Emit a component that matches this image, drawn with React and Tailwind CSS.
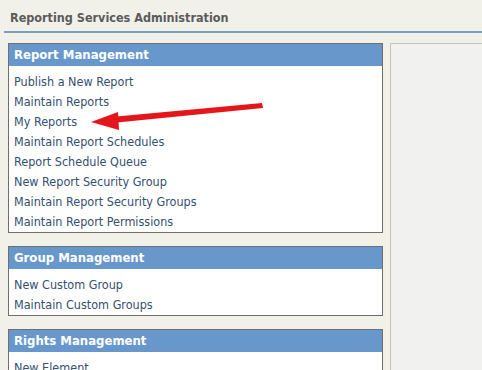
const sections = [
  {
    title: 'Report Management',
    links: [
      'Publish a New Report',
      'Maintain Reports',
      'My Reports',
      'Maintain Report Schedules',
      'Report Schedule Queue',
      'New Report Security Group',
      'Maintain Report Security Groups',
      'Maintain Report Permissions',
    ],
  },
  { title: 'Group Management', links: ['New Custom Group', 'Maintain Custom Groups'] },
  { title: 'Rights Management', links: ['New Element', 'Maintain Elements'] },
];

function Panel({ title, links }) {
  return (
    <div className="border border-[#6f6f6f] bg-white">
      <div className="h-[22px] bg-[#6898cb] px-[5px] flex items-center text-[13px] font-bold text-white">
        {title}
      </div>
      <ul className="pt-[6px] px-[5px]">
        {links.map((l) => (
          <li key={l} className="h-[20px] leading-[20px] text-[12.5px] text-[#34506e] whitespace-nowrap">
            {l}
          </li>
        ))}
      </ul>
    </div>
  );
}

export default function App() {
  return (
    <div
      className="relative h-[370px] w-[482px] overflow-hidden bg-[#f2f1e9]"
      style={{ fontFamily: '"DejaVu Sans Condensed", "DejaVu Sans", sans-serif' }}
    >
      {/* Title bar */}
      <div className="h-[31px] pl-[10px] pt-[9px] text-[12.5px] font-bold text-[#5b5b5b] leading-[18px]">
        Reporting Services Administration
      </div>
      <div className="ml-[4px] h-[2px] bg-[#7c9fbe]" />

      <div className="flex gap-[7px] pt-[10px] pl-[8px]">
        {/* Left menu */}
        <div className="w-[375px] shrink-0 flex flex-col gap-[13px]">
          {sections.map((s) => (
            <Panel key={s.title} {...s} />
          ))}
        </div>
        {/* Right content */}
        <div className="flex-1 h-[340px] border-l border-t border-[#c5c5bc] bg-[#f1f1f0]" />
      </div>

      {/* Annotation arrow */}
      <svg className="absolute left-0 top-0 pointer-events-none" width="482" height="370">
        <polygon points="262,103 263,108 112,123 111,117" fill="#e3161a" />
        <polygon points="91,122 118,112 119,130" fill="#e3161a" />
      </svg>
    </div>
  );
}
